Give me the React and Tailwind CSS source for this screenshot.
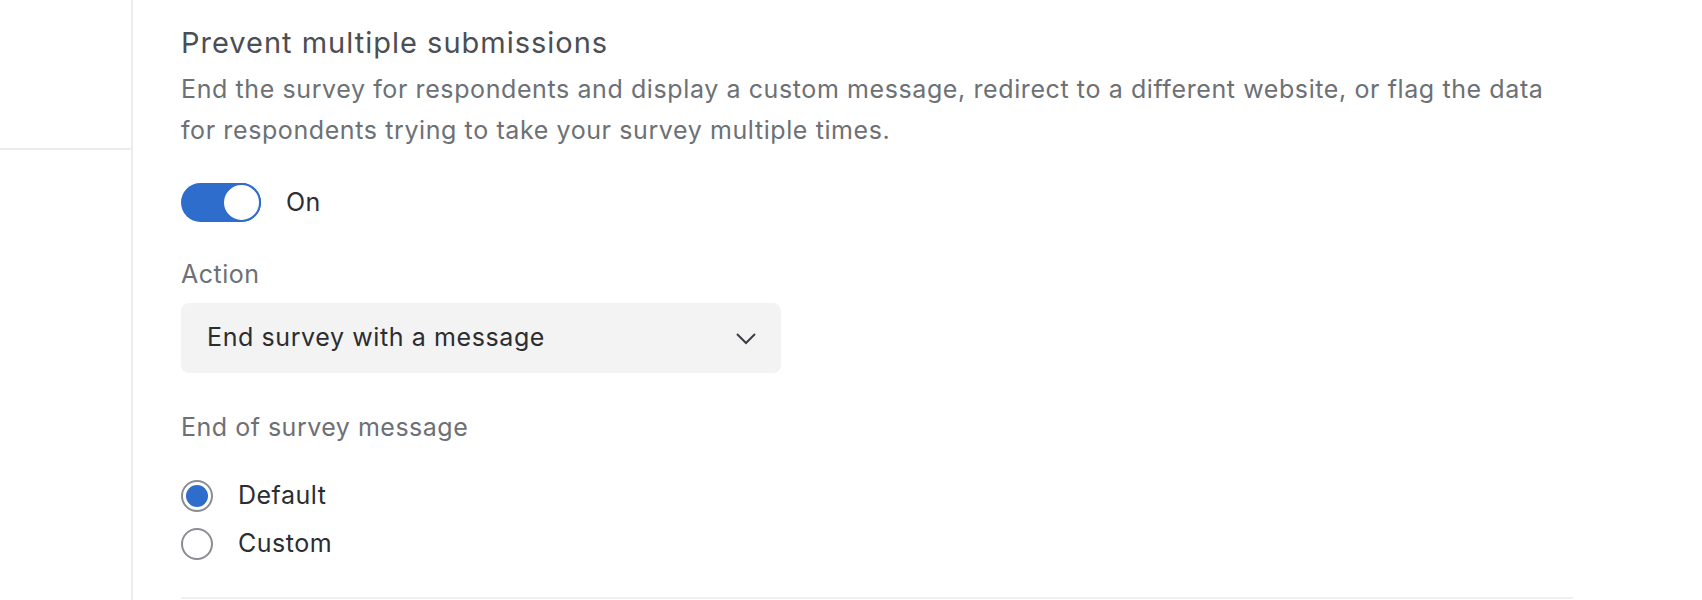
import { useState } from 'react'

const FONT = { fontFamily: 'Inter, "Noto Sans", sans-serif' }

function Toggle({ on, onChange }) {
  return (
    <button onClick={() => onChange(!on)}
      className={`flex h-[39px] w-[80px] items-center rounded-full p-0 ${on ? 'justify-end bg-[#2f6dcc]' : 'justify-start bg-[#c9cbcf]'}`}>
      <span className="h-[39px] w-[39px] rounded-full border-2 border-[#2f6dcc] bg-white" />
    </button>
  )
}

function Radio({ checked, label, onClick }) {
  return (
    <label onClick={onClick} className="flex h-[48px] cursor-pointer items-center gap-[25px]">
      <span className="flex h-[32px] w-[32px] items-center justify-center rounded-full border-2 border-[#8a8d92] bg-white">
        {checked && <span className="h-[22px] w-[22px] rounded-full bg-[#2f6dcc]" />}
      </span>
      <span className="text-[25px] tracking-[0.5px] text-[#2b2d31]">{label}</span>
    </label>
  )
}

export default function App() {
  const [on, setOn] = useState(true)
  const [msg, setMsg] = useState('default')

  return (
    <div className="flex h-[600px] w-full overflow-hidden bg-white" style={FONT}>
      {/* left rail */}
      <div className="w-[133px] shrink-0 border-r-2 border-[#ececec]">
        <div className="h-[150px] border-b-2 border-[#ececec]" />
      </div>

      <div className="flex-1 pl-[48px] pr-[128px] pt-[24px]">
        <div className="w-[1392px]">
          <h2 className="text-[29px] leading-[38px] tracking-[1px] text-[#4b4e53]">Prevent multiple submissions</h2>
          <p className="mt-[7px] text-[25px] leading-[41px] tracking-[0.6px] text-[#6d7075]">
            End the survey for respondents and display a custom message, redirect to a different website, or flag the data for respondents trying to take your survey multiple times.
          </p>

          <div className="mt-[32px] flex items-center gap-[25px]">
            <Toggle on={on} onChange={setOn} />
            <span className="text-[25px] tracking-[0.5px] text-[#2b2d31]">{on ? 'On' : 'Off'}</span>
          </div>

          <div className="mt-[36px] text-[25px] leading-[32px] tracking-[0.5px] text-[#6d7075]">Action</div>
          <button className="mt-[13px] flex h-[70px] w-[600px] items-center justify-between rounded-[8px] bg-[#f3f3f3] pl-[26px] pr-[24px]">
            <span className="text-[25px] tracking-[0.6px] text-[#2b2d31]">End survey with a message</span>
            <svg width="22" height="14" viewBox="0 0 22 14" fill="none">
              <path d="M2 3l9 9 9-9" stroke="#3b3d42" strokeWidth="2" />
            </svg>
          </button>

          <div className="mt-[38px] text-[25px] leading-[32px] tracking-[0.5px] text-[#6d7075]">End of survey message</div>
          <div className="mt-[29px] flex flex-col">
            <Radio checked={msg === 'default'} label="Default" onClick={() => setMsg('default')} />
            <Radio checked={msg === 'custom'} label="Custom" onClick={() => setMsg('custom')} />
          </div>

          <div className="mt-[29px] border-t-2 border-[#f0f0f0]" />
        </div>
      </div>
    </div>
  )
}
